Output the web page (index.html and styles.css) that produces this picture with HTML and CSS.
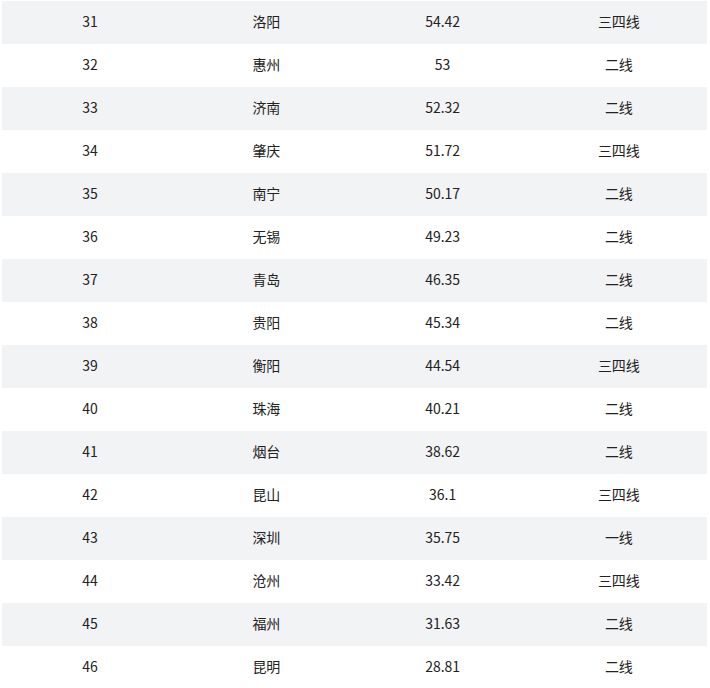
FILE: index.html
```html
<!DOCTYPE html>
<html lang="zh">
<head>
<meta charset="utf-8">
<link rel="stylesheet" href="styles.css">
</head>
<body>
<table class="rank">
<tbody>
<tr><td>31</td><td>洛阳</td><td>54.42</td><td>三四线</td></tr>
<tr><td>32</td><td>惠州</td><td>53</td><td>二线</td></tr>
<tr><td>33</td><td>济南</td><td>52.32</td><td>二线</td></tr>
<tr><td>34</td><td>肇庆</td><td>51.72</td><td>三四线</td></tr>
<tr><td>35</td><td>南宁</td><td>50.17</td><td>二线</td></tr>
<tr><td>36</td><td>无锡</td><td>49.23</td><td>二线</td></tr>
<tr><td>37</td><td>青岛</td><td>46.35</td><td>二线</td></tr>
<tr><td>38</td><td>贵阳</td><td>45.34</td><td>二线</td></tr>
<tr><td>39</td><td>衡阳</td><td>44.54</td><td>三四线</td></tr>
<tr><td>40</td><td>珠海</td><td>40.21</td><td>二线</td></tr>
<tr><td>41</td><td>烟台</td><td>38.62</td><td>二线</td></tr>
<tr><td>42</td><td>昆山</td><td>36.1</td><td>三四线</td></tr>
<tr><td>43</td><td>深圳</td><td>35.75</td><td>一线</td></tr>
<tr><td>44</td><td>沧州</td><td>33.42</td><td>三四线</td></tr>
<tr><td>45</td><td>福州</td><td>31.63</td><td>二线</td></tr>
<tr><td>46</td><td>昆明</td><td>28.81</td><td>二线</td></tr>
</tbody>
</table>
</body>
</html>
```
FILE: styles.css
```css
html, body {
  margin: 0;
  padding: 0;
  background: #ffffff;
}
body {
  padding: 1px 3px 0 2px;
  font-family: "Noto Sans CJK SC", "Noto Sans", sans-serif;
  font-size: 14px;
  color: #222222;
}
.rank {
  width: 705px;
  border-collapse: collapse;
  table-layout: fixed;
}
.rank tr {
  height: 43px;
}
.rank td {
  padding: 0 0 4px 0;
  text-align: center;
  vertical-align: middle;
  line-height: 20px;
}
.rank tr:nth-child(odd) td {
  background: #f2f3f5;
}
```
